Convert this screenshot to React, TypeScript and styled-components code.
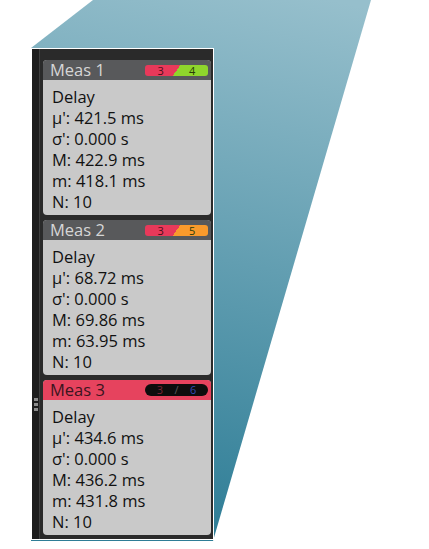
import styled, { createGlobalStyle } from "styled-components";

interface Measurement {
  name: string;
  source: string;
  ref: string;
  mean: string;
  sigma: string;
  max: string;
  min: string;
  count: string;
  tone: "normal" | "active";
  badge: "green" | "orange" | "dark";
}

const measurements: Measurement[] = [
  {
    name: "Meas 1",
    source: "3",
    ref: "4",
    mean: "421.5 ms",
    sigma: "0.000 s",
    max: "422.9 ms",
    min: "418.1 ms",
    count: "10",
    tone: "normal",
    badge: "green",
  },
  {
    name: "Meas 2",
    source: "3",
    ref: "5",
    mean: "68.72 ms",
    sigma: "0.000 s",
    max: "69.86 ms",
    min: "63.95 ms",
    count: "10",
    tone: "normal",
    badge: "orange",
  },
  {
    name: "Meas 3",
    source: "3",
    ref: "6",
    mean: "434.6 ms",
    sigma: "0.000 s",
    max: "436.2 ms",
    min: "431.8 ms",
    count: "10",
    tone: "active",
    badge: "dark",
  },
];

const badgeRight = {
  green: "#8fd52c",
  orange: "#f99a2c",
};

const GlobalStyle = createGlobalStyle`
  html, body {
    margin: 0;
    padding: 0;
    background: #ffffff;
  }
  body {
    font-family: "Open Sans", "Noto Sans", sans-serif;
  }
`;

const Stage = styled.div`
  position: relative;
  width: 429px;
  height: 549px;
  overflow: hidden;
  padding: 48px 0 0 31px;
  box-sizing: border-box;
`;

const Backdrop = styled.svg`
  position: absolute;
  left: 0;
  top: 0;
  width: 429px;
  height: 549px;
`;

const Panel = styled.div`
  position: relative;
  display: flex;
  width: 183px;
  box-sizing: border-box;
  border: 1px solid #ffffff;
  background: #2a2a2a;
`;

const Rail = styled.div`
  width: 8px;
  flex-shrink: 0;
  background: #1d1d1d;
  border-right: 1px solid #3e3e3e;
  display: flex;
  flex-direction: column;
  align-items: center;
  gap: 2px;
  padding-top: 349px;
  box-sizing: border-box;
`;

const GripDot = styled.span`
  width: 4px;
  height: 3px;
  background: #8c8c8c;
`;

const Stack = styled.div`
  flex: 1;
  display: flex;
  flex-direction: column;
  gap: 5px;
  padding: 11px 2px 4px 3px;
`;

const Card = styled.div`
  border-radius: 4px;
  background: #c9c9c9;
`;

const Header = styled.div<{ $active: boolean }>`
  height: 20px;
  display: flex;
  align-items: center;
  justify-content: space-between;
  padding: 0 3px 0 7px;
  border-radius: 4px 4px 0 0;
  background: ${({ $active }) => ($active ? "#e6435e" : "#58595b")};
  color: ${({ $active }) => ($active ? "#3a1520" : "#d6d6d6")};
`;

const Title = styled.span`
  font-size: 16.5px;
  line-height: 18px;
`;

const Badge = styled.div<{ $right: string }>`
  width: 63px;
  height: 11px;
  border-radius: 3px;
  display: flex;
  align-items: center;
  justify-content: space-around;
  font-size: 11px;
  line-height: 11px;
  background: linear-gradient(126deg, #e8395a 50%, ${({ $right }) => $right} 50%);
`;

const DarkBadge = styled.div`
  width: 63px;
  height: 12px;
  border-radius: 6px;
  display: flex;
  align-items: center;
  justify-content: space-around;
  padding: 0 6px;
  box-sizing: border-box;
  font-size: 11px;
  line-height: 12px;
  background: #0d0d0d;
`;

const Digit = styled.span<{ $color: string }>`
  color: ${({ $color }) => $color};
`;

const Body = styled.div`
  padding: 6px 0 3px 9px;
  color: #111111;
  font-size: 16.5px;
  font-weight: 500;
  line-height: 21px;
`;

const Line = styled.div`
  white-space: nowrap;
`;

export default function App() {
  return (
    <>
      <GlobalStyle />
      <Stage>
        <Backdrop viewBox="0 0 429 549">
          <defs>
            <linearGradient id="sky" x1="330" y1="0" x2="210" y2="540" gradientUnits="userSpaceOnUse">
              <stop offset="0" stopColor="#96bfcc" />
              <stop offset="1" stopColor="#2e7d96" />
            </linearGradient>
          </defs>
          <polygon points="93,0 371,0 213,541 31,541 31,48" fill="url(#sky)" />
        </Backdrop>
        <Panel>
          <Rail>
            <GripDot />
            <GripDot />
            <GripDot />
          </Rail>
          <Stack>
            {measurements.map((m) => (
              <Card key={m.name}>
                <Header $active={m.tone === "active"}>
                  <Title>{m.name}</Title>
                  {m.badge === "dark" ? (
                    <DarkBadge>
                      <Digit $color="#7c2435">{m.source}</Digit>
                      <Digit $color="#5a5a5a">/</Digit>
                      <Digit $color="#3049b4">{m.ref}</Digit>
                    </DarkBadge>
                  ) : (
                    <Badge $right={badgeRight[m.badge]}>
                      <Digit $color="#4a0d18">{m.source}</Digit>
                      <Digit $color="#2a3a08">{m.ref}</Digit>
                    </Badge>
                  )}
                </Header>
                <Body>
                  <Line>Delay</Line>
                  <Line>μ': {m.mean}</Line>
                  <Line>σ': {m.sigma}</Line>
                  <Line>M: {m.max}</Line>
                  <Line>m: {m.min}</Line>
                  <Line>N: {m.count}</Line>
                </Body>
              </Card>
            ))}
          </Stack>
        </Panel>
      </Stage>
    </>
  );
}
